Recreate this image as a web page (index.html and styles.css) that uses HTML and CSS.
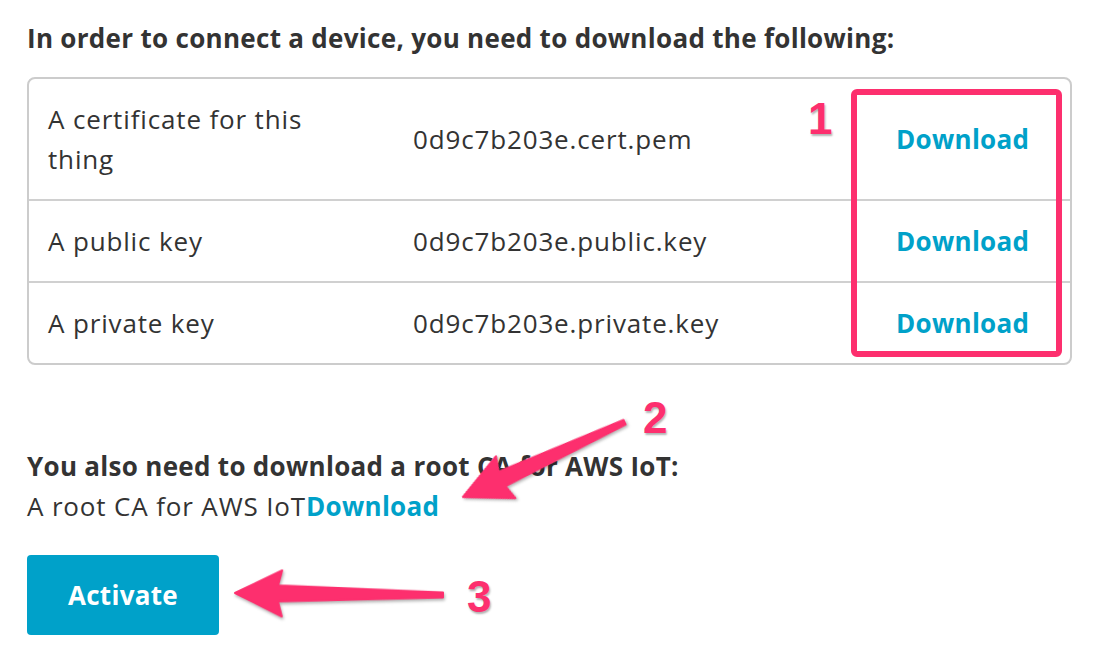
FILE: index.html
```html
<!DOCTYPE html>
<html lang="en">
<head>
<meta charset="utf-8">
<title>Connect a device</title>
<link rel="stylesheet" href="styles.css">
</head>
<body>
<main class="page">
  <h2 class="title">In order to connect a device, you need to download the following:</h2>
  <div class="files">
    <div class="row row-first">
      <div class="label">A certificate for this thing</div>
      <div class="file">0d9c7b203e.cert.pem</div>
      <a class="dl" href="#">Download</a>
    </div>
    <div class="row">
      <div class="label">A public key</div>
      <div class="file">0d9c7b203e.public.key</div>
      <a class="dl" href="#">Download</a>
    </div>
    <div class="row">
      <div class="label">A private key</div>
      <div class="file">0d9c7b203e.private.key</div>
      <a class="dl" href="#">Download</a>
    </div>
  </div>
  <h2 class="title title-root">You also need to download a root CA for AWS IoT:</h2>
  <p class="root">A root CA for AWS IoT<a class="dl" href="#">Download</a></p>
  <button class="activate" type="button">Activate</button>
</main>

<svg class="annot" width="1100" height="664" viewBox="0 0 1100 664" aria-hidden="true">
  <rect class="hl" x="854" y="92" width="205" height="262" rx="3"/>
  <g class="arrow" transform="translate(463 497) rotate(-24.84)">
    <polygon points="0,0 47,-23 43,-8 178,-2.5 178,2.5 43,8 47,23"/>
  </g>
  <g class="arrow" transform="translate(235 593) rotate(0.55)">
    <polygon points="0,0 47,-23 43,-8 208,-2.5 208,2.5 43,8 47,23"/>
  </g>
</svg>
<span class="num num-1">1</span>
<span class="num num-2">2</span>
<span class="num num-3">3</span>
</body>
</html>
```

FILE: styles.css
```css
* { box-sizing: border-box; }

html, body {
  margin: 0;
  padding: 0;
  background: #ffffff;
}

body {
  position: relative;
  width: 1100px;
  height: 664px;
  overflow: hidden;
  font-family: "Open Sans", "Liberation Sans", sans-serif;
  font-size: 26px;
  line-height: 40px;
  letter-spacing: 0.85px;
  color: #333333;
}

.page {
  padding: 18px 28px 0 27px;
}

.title {
  margin: 0;
  font-size: 26px;
  font-weight: 700;
  line-height: 40px;
  letter-spacing: 0.3px;
  color: #333333;
}

.files {
  margin-top: 19px;
  border: 2px solid #cccccc;
  border-radius: 8px;
}

.row {
  display: grid;
  grid-template-columns: 365px 483px 1fr;
  align-items: center;
  border-top: 2px solid #d0d0d0;
}

.row-first {
  border-top: none;
}

.label {
  padding: 20px 60px 20px 19px;
}

.file {
  padding: 20px 19px;
}

.dl {
  color: #00a1c9;
  font-weight: 700;
  letter-spacing: 0.3px;
  text-decoration: none;
}

.row .dl {
  padding: 20px 19px;
}

.title-root {
  margin-top: 81px;
}

.root {
  margin: 0;
}

.activate {
  margin-top: 29px;
  width: 192px;
  height: 80px;
  border: none;
  border-radius: 4px;
  background: #00a1c9;
  color: #ffffff;
  font-family: "Open Sans", "Liberation Sans", sans-serif;
  font-size: 26px;
  font-weight: 700;
  letter-spacing: 0.3px;
  padding: 0;
}

.annot {
  position: absolute;
  left: 0;
  top: 0;
  pointer-events: none;
}

.hl {
  fill: none;
  stroke: #fd2f6e;
  stroke-width: 6;
}

.arrow {
  fill: #fd2f6e;
  stroke: #fd2f6e;
  stroke-width: 2;
  stroke-linejoin: round;
  filter: drop-shadow(1px 2px 1.5px rgba(0, 0, 0, 0.3));
}

.num {
  position: absolute;
  font-family: "Liberation Sans", Arial, sans-serif;
  font-weight: 700;
  font-size: 44px;
  line-height: 44px;
  letter-spacing: 0;
  color: #fd2f6e;
  -webkit-text-stroke: 7px #ffffff;
  paint-order: stroke fill;
  text-shadow: 1px 2px 2px rgba(0, 0, 0, 0.3);
}

.num-1 { left: 808px; top: 97px; }
.num-2 { left: 643px; top: 396px; }
.num-3 { left: 467px; top: 575px; }
```
